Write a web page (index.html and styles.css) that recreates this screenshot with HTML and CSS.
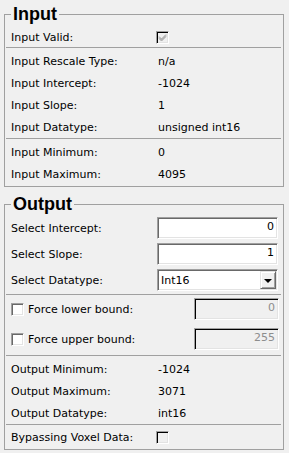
FILE: index.html
```
<!DOCTYPE html>
<html lang="en">
<head>
	<meta charset="UTF-8">
	<title>Rescale properties</title>
	<link rel="stylesheet" href="styles.css">
</head>
<body>
	<fieldset class="group group-input">
		<legend>Input</legend>
		<div class="row row-first">
			<span class="label label-check">Input Valid:</span>
			<span class="check check-off">
				<svg width="11" height="11" viewBox="0 0 11 11"><path d="M2 4.5 L4.5 7 L9 2.5 M2 5.5 L4.5 8 L9 3.5 M2 6.5 L4.5 9 L9 4.5" stroke="#a0a0a0" stroke-width="1" fill="none"/></svg>
			</span>
		</div>
		<div class="sep"></div>
		<div class="row"><span class="label">Input Rescale Type:</span><span>n/a</span></div>
		<div class="row"><span class="label">Input Intercept:</span><span>-1024</span></div>
		<div class="row"><span class="label">Input Slope:</span><span>1</span></div>
		<div class="row"><span class="label">Input Datatype:</span><span>unsigned int16</span></div>
		<div class="sep"></div>
		<div class="row"><span class="label">Input Minimum:</span><span>0</span></div>
		<div class="row"><span class="label">Input Maximum:</span><span>4095</span></div>
	</fieldset>

	<fieldset class="group group-output">
		<legend>Output</legend>
		<div class="row row-edit"><span class="label label-edit">Select Intercept:</span><div class="edit">0</div></div>
		<div class="row row-edit"><span class="label label-edit">Select Slope:</span><div class="edit">1</div></div>
		<div class="row row-edit">
			<span class="label label-edit">Select Datatype:</span>
			<div class="combo"><span class="combo-text">Int16</span><span class="combo-btn"><span class="arrow"></span></span></div>
		</div>
		<div class="sep sep-edit"></div>
		<div class="row row-bound">
			<span class="check"></span><span class="bound-label">Force lower bound:</span>
			<div class="edit edit-off">0</div>
		</div>
		<div class="row row-bound">
			<span class="check"></span><span class="bound-label">Force upper bound:</span>
			<div class="edit edit-off">255</div>
		</div>
		<div class="sep"></div>
		<div class="row"><span class="label">Output Minimum:</span><span>-1024</span></div>
		<div class="row"><span class="label">Output Maximum:</span><span>3071</span></div>
		<div class="row"><span class="label">Output Datatype:</span><span>int16</span></div>
		<div class="sep sep-last"></div>
		<div class="row">
			<span class="label label-check">Bypassing Voxel Data:</span>
			<span class="check check-off"></span>
		</div>
	</fieldset>
</body>
</html>
```

FILE: styles.css
```
* {
	margin: 0;
	padding: 0;
	box-sizing: border-box;
}
body {
	background-color: #f0f0f0;
	color: #000;
	font: 11px "DejaVu Sans", sans-serif;
	padding: 5px 5px 0 4px;
}
.group {
	border: 1px solid #a0a0a0;
	min-width: 0;
}
.group legend {
	font: bold 18px/18px "Liberation Sans", sans-serif;
	padding: 0 2px;
	margin-left: 6px;
}
.group-input {
	padding: 4px 0 1px 0;
}
.group-output {
	margin-top: 8px;
	padding: 2px 0 1px 0;
}
.row {
	display: flex;
	align-items: center;
	height: 22px;
	padding-left: 6px;
}
.row-first {
	height: 20px;
}
.row-edit {
	height: 26px;
}
.row-bound {
	height: 28px;
	margin-bottom: 2px;
}
.label {
	width: 147px;
	flex-shrink: 0;
}
.label-edit {
	width: 146px;
}
.label-check {
	width: 145px;
}
.sep {
	height: 1px;
	background-color: #a0a0a0;
	margin: 0 2px 2px 1px;
}
.sep-edit {
	margin-top: 1px;
	margin-bottom: 0;
}
.sep-last {
	margin-bottom: 1px;
}

/* sunken edit boxes */
.edit {
	width: 121px;
	height: 22px;
	line-height: 18px;
	text-align: right;
	padding-right: 3px;
	background-color: #fff;
	border: 1px solid;
	border-color: #a0a0a0 #fff #fff #a0a0a0;
	box-shadow: inset 1px 1px #696969, inset -1px -1px #e3e3e3;
}
.edit-off {
	width: 85px;
	margin-left: auto;
	margin-right: 4px;
	background-color: #f0f0f0;
	color: #8d8d8d;
	box-shadow: inset 1px 1px #000, inset -1px -1px #e3e3e3;
}

/* combo box */
.combo {
	width: 121px;
	height: 22px;
	display: flex;
	align-items: center;
	padding: 1px;
	background-color: #fff;
	border: 1px solid;
	border-color: #a0a0a0 #fff #fff #a0a0a0;
	box-shadow: inset 1px 1px #696969, inset -1px -1px #e3e3e3;
}
.combo-text {
	flex: 1;
	padding-left: 2px;
}
.combo-btn {
	width: 16px;
	height: 18px;
	margin-right: 0;
	display: flex;
	align-items: center;
	justify-content: center;
	background-color: #f0f0f0;
	border: 1px solid;
	border-color: #e3e3e3 #696969 #696969 #e3e3e3;
	box-shadow: inset 1px 1px #fff, inset -1px -1px #a0a0a0;
}
.arrow {
	width: 0;
	height: 0;
	border-left: 4px solid transparent;
	border-right: 4px solid transparent;
	border-top: 4px solid #000;
	margin-top: 1px;
}

/* check boxes */
.check {
	width: 13px;
	height: 13px;
	flex-shrink: 0;
	display: flex;
	align-items: center;
	justify-content: center;
	background-color: #fff;
	border: 1px solid;
	border-color: #a0a0a0 #fff #fff #a0a0a0;
	box-shadow: inset 1px 1px #696969, inset -1px -1px #e3e3e3;
}
.check-off {
	background-color: #f0f0f0;
	box-shadow: inset 1px 1px #000, inset -1px -1px #e3e3e3;
}
.check svg {
	display: block;
}
.bound-label {
	margin-left: 4px;
}
```
